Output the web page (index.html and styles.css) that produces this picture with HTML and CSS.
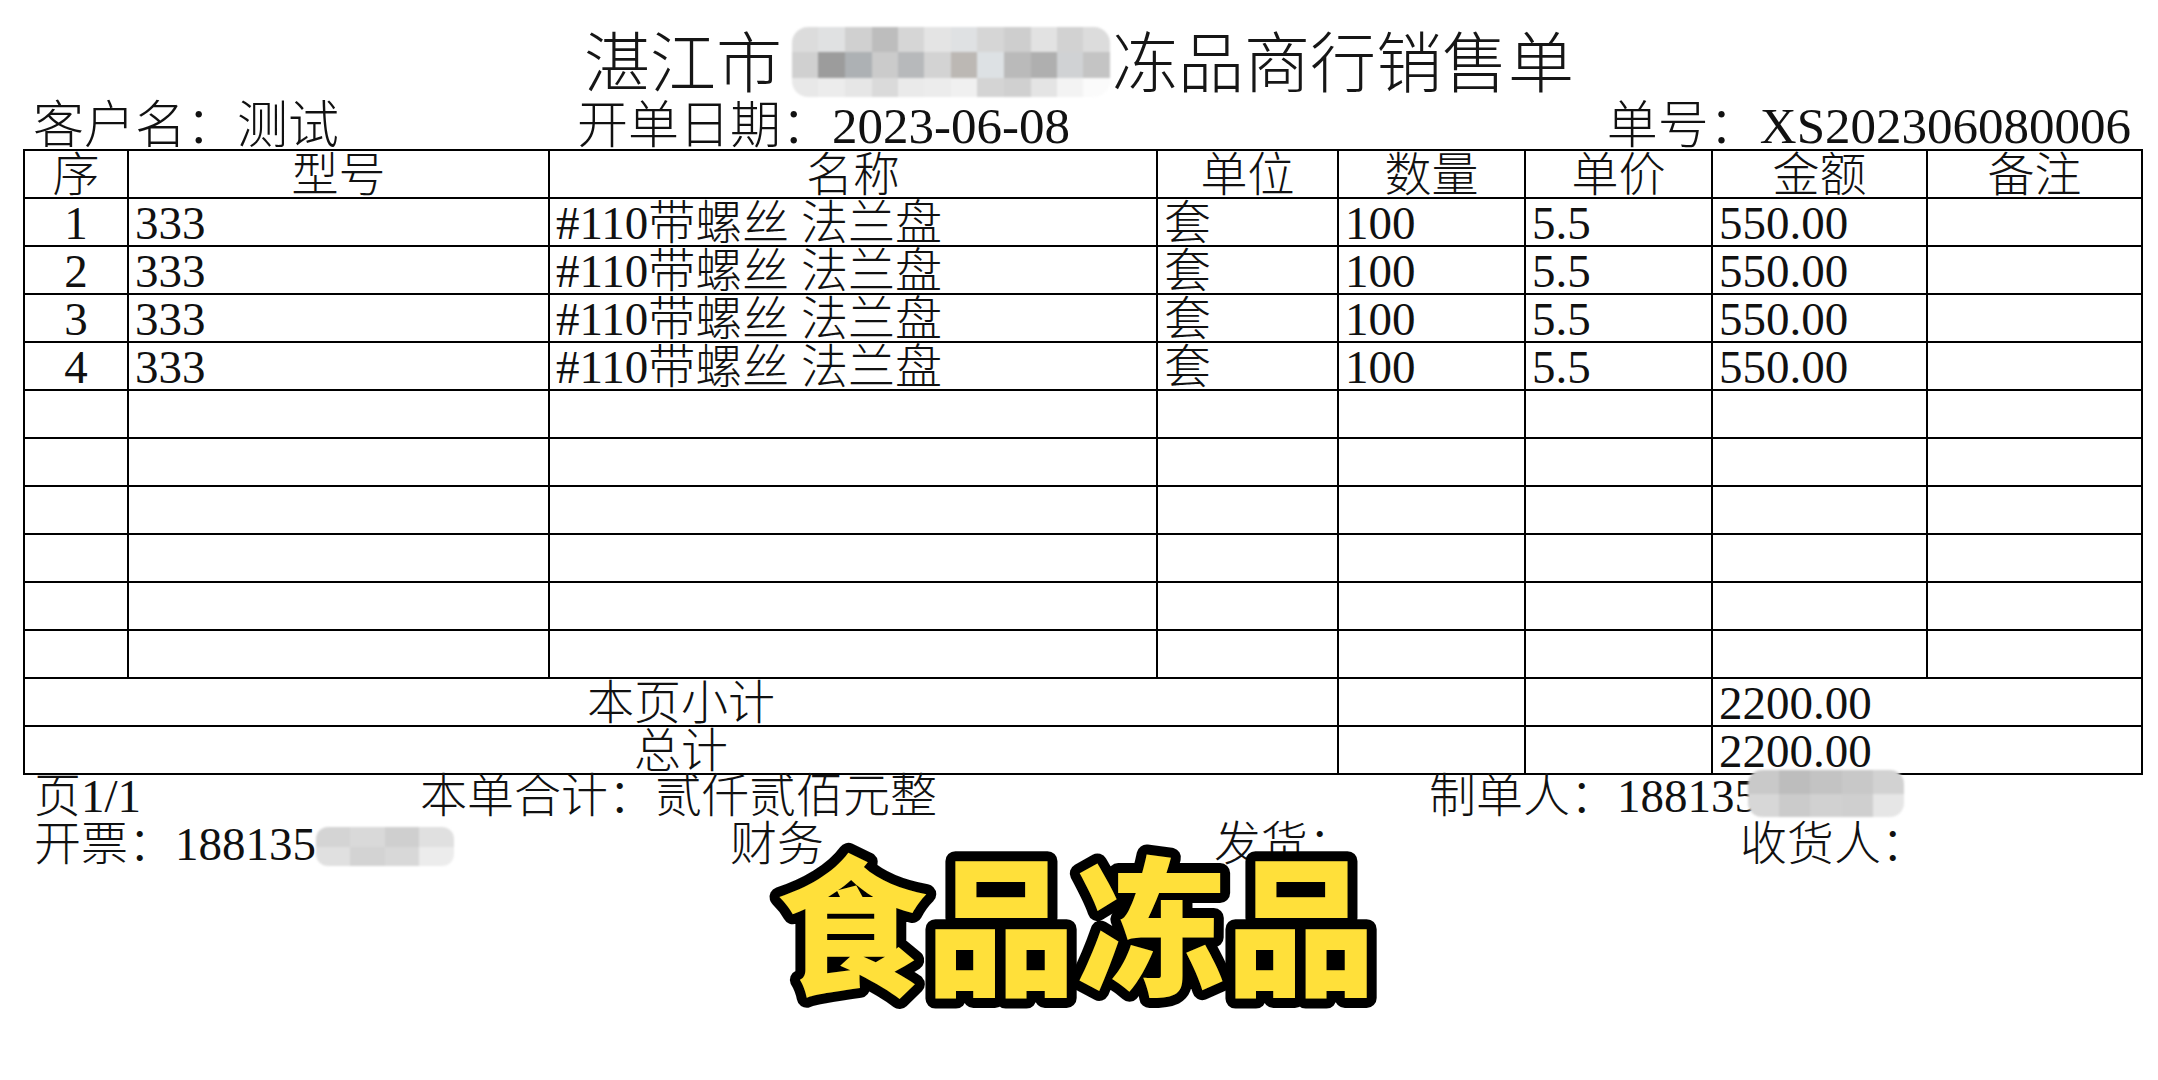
FILE: index.html
```html
<!DOCTYPE html>
<html lang="zh-CN">
<head>
<meta charset="utf-8">
<title>销售单</title>
<link rel="stylesheet" href="styles.css">
</head>
<body>
<div class="page">
  <div class="title">湛江市<span class="title-hole"><span class="mosaic mosaic-title"><span class="mrow t1"></span><span class="mrow t2"></span><span class="mrow t3"></span></span></span>冻品商行销售单</div>

  <div class="meta">
    <span class="meta-cust">客户名：测试</span>
    <span class="meta-date">开单日期：2023-06-08</span>
    <span class="meta-no">单号：XS202306080006</span>
  </div>

  <table class="sheet">
    <colgroup>
      <col class="c-seq"><col class="c-model"><col class="c-name"><col class="c-unit"><col class="c-qty"><col class="c-price"><col class="c-amount"><col class="c-note">
    </colgroup>
    <thead>
      <tr><th>序</th><th>型号</th><th>名称</th><th>单位</th><th>数量</th><th>单价</th><th>金额</th><th>备注</th></tr>
    </thead>
    <tbody>
      <tr><td class="seq">1</td><td>333</td><td>#110带螺丝 法兰盘</td><td>套</td><td>100</td><td>5.5</td><td>550.00</td><td></td></tr>
      <tr><td class="seq">2</td><td>333</td><td>#110带螺丝 法兰盘</td><td>套</td><td>100</td><td>5.5</td><td>550.00</td><td></td></tr>
      <tr><td class="seq">3</td><td>333</td><td>#110带螺丝 法兰盘</td><td>套</td><td>100</td><td>5.5</td><td>550.00</td><td></td></tr>
      <tr><td class="seq">4</td><td>333</td><td>#110带螺丝 法兰盘</td><td>套</td><td>100</td><td>5.5</td><td>550.00</td><td></td></tr>
      <tr><td></td><td></td><td></td><td></td><td></td><td></td><td></td><td></td></tr>
      <tr><td></td><td></td><td></td><td></td><td></td><td></td><td></td><td></td></tr>
      <tr><td></td><td></td><td></td><td></td><td></td><td></td><td></td><td></td></tr>
      <tr><td></td><td></td><td></td><td></td><td></td><td></td><td></td><td></td></tr>
      <tr><td></td><td></td><td></td><td></td><td></td><td></td><td></td><td></td></tr>
      <tr><td></td><td></td><td></td><td></td><td></td><td></td><td></td><td></td></tr>
      <tr><td colspan="4" class="label">本页小计</td><td></td><td></td><td colspan="2">2200.00</td></tr>
      <tr><td colspan="4" class="label">总计</td><td></td><td></td><td colspan="2">2200.00</td></tr>
    </tbody>
  </table>

  <div class="foot">
    <div class="foot-line">
      <span class="f-page">页1/1</span>
      <span class="f-total">本单合计：贰仟贰佰元整</span>
      <span class="f-maker">制单人：188135</span>
    </div>
    <div class="foot-line">
      <span class="f-ticket">开票：188135</span>
      <span class="f-finance">财务</span>
      <span class="f-ship">发货：</span>
      <span class="f-recv">收货人：</span>
    </div>
  </div>

  <div class="mosaic mosaic-maker"><span class="mrow m1"></span><span class="mrow m2"></span></div>
  <div class="mosaic mosaic-ticket"><span class="mrow k1"></span><span class="mrow k2"></span></div>

  <svg class="stamp" width="690" height="200" viewBox="0 0 690 200" xmlns="http://www.w3.org/2000/svg">
    <text class="stamp-text" x="36" y="164">食品冻品</text>
  </svg>
</div>
</body>
</html>
```

FILE: styles.css
```css
html, body {
  margin: 0;
  padding: 0;
  background: #ffffff;
}

.page {
  position: relative;
  width: 2158px;
  height: 1080px;
  box-sizing: border-box;
  padding-left: 23px;
  overflow: hidden;
  color: #111111;
  font-family: "Liberation Serif", "Noto Sans CJK SC", serif;
  font-weight: 300;
}

/* Title */
.title {
  font-family: "Noto Sans CJK SC", sans-serif;
  font-size: 66px;
  line-height: 66px;
  height: 66px;
  padding-top: 25px;
  text-align: center;
  margin-left: -23px;
  white-space: nowrap;
  color: #161616;
}

.title-hole {
  display: inline-block;
  position: relative;
  width: 330px;
  height: 66px;
  vertical-align: top;
}

.mosaic {
  display: flex;
  flex-direction: column;
  overflow: hidden;
  filter: blur(1.2px);
}

.mrow {
  display: block;
  flex: 1 1 0;
}

.mosaic-title {
  position: absolute;
  left: 10px;
  top: 2px;
  width: 318px;
  height: 70px;
  border-radius: 16px;
}

.t1 {
  flex: 25 1 0;
  background: linear-gradient(90deg,
    #dcdcdc 0 8.33%, #e0e1e2 8.33% 16.66%, #d0d0d0 16.66% 25%, #bdbdbd 25% 33.33%,
    #d6d6d6 33.33% 41.66%, #e4e4e4 41.66% 50%, #dfe1e3 50% 58.33%, #d6d6d6 58.33% 66.66%,
    #cecece 66.66% 75%, #e2e2e2 75% 83.33%, #d2d2d2 83.33% 91.66%, #dcdcdc 91.66% 100%);
}

.t2 {
  flex: 26 1 0;
  background: linear-gradient(90deg,
    #d0d0d0 0 8.33%, #9c9c9c 8.33% 16.66%, #adb1b4 16.66% 25%, #cbcbcb 25% 33.33%,
    #b7b9bb 33.33% 41.66%, #d3d3d3 41.66% 50%, #bcb8b4 50% 58.33%, #dde1e4 58.33% 66.66%,
    #bababa 66.66% 75%, #afafaf 75% 83.33%, #d0d2d4 83.33% 91.66%, #c4c4c4 91.66% 100%);
}

.t3 {
  flex: 19 1 0;
  background: linear-gradient(90deg,
    #e8e8e8 0 8.33%, #ececec 8.33% 16.66%, #e6e6e6 16.66% 25%, #dadada 25% 33.33%,
    #eaeaea 33.33% 41.66%, #ececec 41.66% 50%, #f0f0f0 50% 58.33%, #d4d4d4 58.33% 66.66%,
    #d0d0d0 66.66% 75%, #e4e4e4 75% 83.33%, #f3f3f3 83.33% 91.66%, #fbfbfb 91.66% 100%);
}

/* Meta line */
.meta {
  display: flex;
  height: 45px;
  padding-top: 13px;
  padding-left: 10px;
  padding-right: 27px;
  font-size: 51px;
  line-height: 45px;
  white-space: nowrap;
}

.meta-cust {
  width: 544px;
  flex: none;
}

.meta-no {
  margin-left: auto;
}

/* Table */
.sheet {
  border-collapse: collapse;
  table-layout: fixed;
  width: 2119px;
  font-size: 47px;
}

.c-seq { width: 104px; }
.c-model { width: 421px; }
.c-name { width: 608px; }
.c-unit { width: 181px; }
.c-qty { width: 187px; }
.c-price { width: 187px; }
.c-amount { width: 215px; }
.c-note { width: 215px; }

.sheet th,
.sheet td {
  border: 2px solid #000000;
  height: 48px;
  box-sizing: border-box;
  padding: 3px 0 0 6px;
  line-height: 42px;
  vertical-align: top;
  white-space: nowrap;
  overflow: visible;
  font-weight: 300;
  text-align: left;
}

.sheet th {
  text-align: center;
  padding-left: 0;
}

.sheet td.seq,
.sheet td.label {
  text-align: center;
  padding-left: 0;
}

/* Footer */
.foot {
  padding-left: 11px;
  margin-top: -3px;
  font-size: 47px;
  line-height: 49px;
  white-space: nowrap;
}

.foot-line {
  display: flex;
  height: 48px;
}

.foot-line > span {
  flex: none;
}

.f-page { width: 386px; }
.f-total { width: 1009px; }
.f-ticket { width: 696px; }
.f-finance { width: 484px; }
.f-ship { width: 526px; }

/* Footer blurs */
.mosaic-maker {
  position: absolute;
  left: 1748px;
  top: 770px;
  width: 156px;
  height: 47px;
  border-radius: 14px;
}

.m1 {
  background: linear-gradient(90deg,
    #c9c9c9 0 20%, #bdbdbd 20% 40%, #c3c3c3 40% 60%, #c8c8c8 60% 80%, #d2d2d2 80% 100%);
}

.m2 {
  background: linear-gradient(90deg,
    #d7d7d7 0 20%, #cbcbcb 20% 40%, #d1d1d1 40% 60%, #cfcfcf 60% 80%, #e6e6e6 80% 100%);
}

.mosaic-ticket {
  position: absolute;
  left: 316px;
  top: 827px;
  width: 138px;
  height: 39px;
  border-radius: 12px;
}

.k1 {
  background: linear-gradient(90deg,
    #d4d4d4 0 25%, #d9d9d9 25% 50%, #cfcfcf 50% 75%, #e0e0e0 75% 100%);
}

.k2 {
  background: linear-gradient(90deg,
    #e0e0e0 0 25%, #d3d3d3 25% 50%, #d8d8d8 50% 75%, #ececec 75% 100%);
}

/* Overlay caption */
.stamp {
  position: absolute;
  left: 740px;
  top: 820px;
}

.stamp-text {
  font-family: "Noto Sans CJK SC", sans-serif;
  font-weight: 900;
  font-size: 150px;
  fill: #ffe03a;
  stroke: #000000;
  stroke-width: 20px;
  stroke-linejoin: round;
  paint-order: stroke fill;
}
```
